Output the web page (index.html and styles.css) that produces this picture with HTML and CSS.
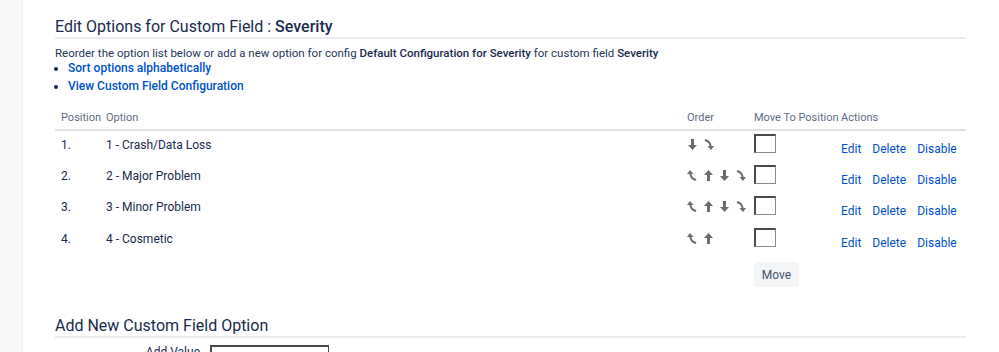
FILE: index.html
```html
<!DOCTYPE html>
<html>
<head>
  <link rel="stylesheet" href="styles.css">
</head>
<body>
  <div class="sidebar"></div>
  <div class="main">
    <h2 class="page-title">Edit Options for Custom Field : <strong>Severity</strong></h2>
    <p class="intro">Reorder the option list below or add a new option for config <strong>Default Configuration for Severity</strong> for custom field <strong>Severity</strong></p>
    <ul class="links">
      <li><a href="#">Sort options alphabetically</a></li>
      <li><a href="#">View Custom Field Configuration</a></li>
    </ul>

    <table class="options">
      <thead>
        <tr>
          <th class="col-pos">Position</th>
          <th class="col-opt">Option</th>
          <th class="col-order">Order</th>
          <th class="col-move">Move To Position</th>
          <th class="col-actions">Actions</th>
        </tr>
      </thead>
      <tbody id="rows">
        <!-- rows are built by the script below -->
      </tbody>
    </table>

    <div class="move-row">
      <button class="move-button">Move</button>
    </div>

    <h2 class="page-title second">Add New Custom Field Option</h2>
    <div class="add-row">
      <label class="add-label" for="add-value">Add Value</label>
      <input type="text" id="add-value" class="add-input">
    </div>
  </div>

  <script>
    const options = ['1 - Crash/Data Loss', '2 - Major Problem', '3 - Minor Problem', '4 - Cosmetic'];

    const icons = {
      first: '<svg width="11" height="11" viewBox="0 0 11 11"><path d="M3 0 L6.5 4 L4.4 4 C4.6 6.5 6.5 8.2 9.5 9 L8.5 11 C5 9.8 2.8 7.6 2.4 4 L0 4 Z" fill="#6b6b6b"/></svg>',
      up: '<svg width="11" height="11" viewBox="0 0 11 11"><path d="M5.5 0 L10 5 L7 5 L7 11 L4 11 L4 5 L1 5 Z" fill="#6b6b6b"/></svg>',
      down: '<svg width="11" height="11" viewBox="0 0 11 11"><path d="M4 0 L7 0 L7 6 L10 6 L5.5 11 L1 6 L4 6 Z" fill="#6b6b6b"/></svg>',
      last: '<svg width="11" height="11" viewBox="0 0 11 11"><path d="M2.5 0 C6 1.2 8.2 3.4 8.6 7 L11 7 L8 11 L4.5 7 L6.6 7 C6.4 4.5 4.5 2.8 1.5 2 Z" fill="#6b6b6b"/></svg>'
    };

    const tbody = document.getElementById('rows');
    options.forEach((name, i) => {
      const keys = [];
      if (i > 0) keys.push('first', 'up');
      if (i < options.length - 1) keys.push('down', 'last');
      const arrows = keys.map(k => `<a href="#" class="arrow">${icons[k]}</a>`).join('');
      const tr = document.createElement('tr');
      tr.innerHTML = `
        <td class="col-pos">${i + 1}.</td>
        <td class="col-opt">${name}</td>
        <td class="col-order"><div class="arrows">${arrows}</div></td>
        <td class="col-move"><input type="text" class="pos-input"></td>
        <td class="col-actions"><a href="#">Edit</a><a href="#">Delete</a><a href="#">Disable</a></td>`;
      tbody.appendChild(tr);
    });
  </script>
</body>
</html>
```

FILE: styles.css
```css
body {
  font-family: Roboto, 'Noto Sans', sans-serif;
  margin: 0;
  padding: 0;
  background-color: #ffffff;
  color: #172b4d;
  display: flex;
  height: 100vh;
  overflow: hidden;
}

.sidebar {
  width: 22px;
  flex-shrink: 0;
  background-color: #f7f8f9;
  border-right: 1px solid #eeeff1;
}

.main {
  flex: 1;
  padding: 17px 32px 0 32px;
}

.page-title {
  margin: 0;
  width: 911px;
  font-size: 16px;
  font-weight: 400;
  line-height: 20px;
  padding-bottom: 0;
  border-bottom: 2px solid #ebecf0;
}

.page-title strong {
  font-weight: 500;
}

.intro {
  margin: 6px 0 0 0;
  font-size: 11.5px;
  line-height: 16px;
  color: #253858;
}

.intro strong {
  font-weight: 500;
  color: #172b4d;
}

.links {
  margin: -2px 0 0 0;
  padding: 0 0 0 13px;
  font-size: 12px;
  line-height: 18px;
}

.links a {
  color: #0052cc;
  font-weight: 500;
  text-decoration: none;
}

.options {
  margin-top: 11px;
  width: 911px;
  border-collapse: collapse;
  table-layout: fixed;
}

.options th,
.options td {
  box-sizing: border-box;
}

.options th {
  text-align: left;
  font-weight: 400;
  font-size: 11px;
  color: #5e6c84;
  padding: 0 6px;
  height: 24px;
  white-space: nowrap;
  border-bottom: 2px solid #dfe1e6;
}

.options td {
  height: 31.5px;
  padding: 0 6px;
  font-size: 12px;
  color: #172b4d;
  vertical-align: middle;
}

.col-pos { width: 45px; }
.col-opt { width: 581px; }
.col-order { width: 67px; }
.col-move { width: 87px; }
.col-actions { width: 131px; }

.options td.col-pos,
.options td.col-opt {
  padding-bottom: 3px;
}

.arrows {
  display: flex;
  gap: 5px;
  padding-bottom: 4px;
}

.arrow {
  display: block;
  width: 11px;
  height: 11px;
}

.pos-input {
  display: block;
  width: 22px;
  height: 19px;
  box-sizing: border-box;
  border: 1px solid #4a4a4a;
  border-right-color: #8a8a8a;
  border-bottom-color: #8a8a8a;
  border-top-width: 2px;
  border-left-width: 2px;
  padding: 0;
  margin-bottom: 6px;
}

.options td.col-actions {
  padding-top: 5px;
}

.col-actions a {
  color: #0052cc;
  text-decoration: none;
  margin-right: 11px;
}

.move-row {
  padding: 6px 0 0 699px;
}

.move-button {
  font-family: Roboto, 'Noto Sans', sans-serif;
  font-size: 12px;
  color: #42526e;
  background-color: #f4f5f7;
  border: none;
  border-radius: 3px;
  height: 25px;
  width: 45px;
  padding: 0;
}

.page-title.second {
  margin-top: 29px;
}

.add-row {
  display: flex;
  align-items: flex-start;
  margin-top: 7px;
}

.add-label {
  width: 145px;
  text-align: right;
  font-size: 12px;
  padding-right: 10px;
  line-height: 14px;
}

.add-input {
  width: 119px;
  height: 20px;
  box-sizing: border-box;
  border: 1px solid #4a4a4a;
  border-top-width: 2px;
  border-left-width: 2px;
}
```
